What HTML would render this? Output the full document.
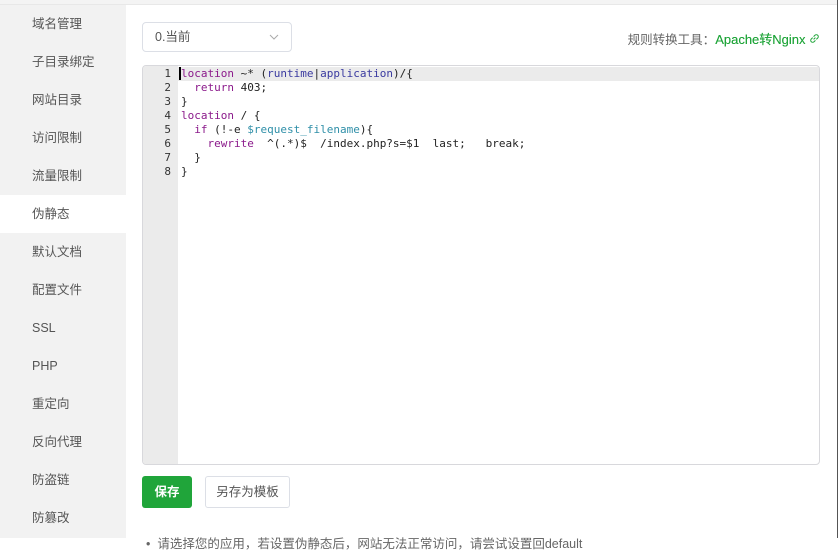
<!DOCTYPE html>
<html><head><meta charset="utf-8"><style>
*{margin:0;padding:0;box-sizing:border-box}
body{width:838px;height:538px;overflow:hidden;background:#fff;font-family:"Liberation Sans","Noto Sans CJK SC",sans-serif;position:relative}
.top{position:absolute;left:0;top:0;width:838px;height:5px;background:#f4f4f4;border-bottom:1px solid #e8e8e8}
.side{position:absolute;left:0;top:5px;width:126px;height:533px;background:#f2f2f2}
.side div{height:38px;line-height:38px;padding-left:32px;font-size:12.5px;color:#555}
.side div.on{background:#fff}
.sel{position:absolute;left:142px;top:22px;width:150px;height:30px;border:1px solid #dcdfe6;border-radius:4px;font-size:12.5px;color:#555;line-height:29px;padding-left:12px}
.sel svg{position:absolute;right:12px;top:11px}
.tool{position:absolute;right:18px;top:29px;font-size:12.5px;color:#666}
.tool b{font-weight:normal;color:#20a53a;font-size:13px;text-shadow:0 0 0.3px #20a53a}
.ed{position:absolute;left:142px;top:65px;width:678px;height:400px;border:1px solid #d8d8dc;border-radius:4px;overflow:hidden}
.gut{position:absolute;left:0;top:0;width:35px;height:100%;background:#ebebeb}
.hl{position:absolute;left:0;top:1px;width:100%;height:14px;background:#ebebeb}
.code{position:absolute;left:0;top:1px;font-family:"DejaVu Sans Mono","Liberation Mono",monospace;font-size:11px;line-height:14px;white-space:pre;color:#222}
.code .n{display:inline-block;width:28px;text-align:right;color:#333;margin-right:10px;font-size:11px;line-height:14px}
.k{color:#8b1a8b}.v{color:#2f8fa8}.p{color:#3a3aa0}
.cur{border-left:2px solid #000;margin-left:-2px}
.btn1{position:absolute;left:142px;top:476px;width:50px;height:32px;background:#20a53a;border-radius:3px;color:#fff;font-size:12.5px;line-height:32px;text-align:center;font-weight:bold}
.btn2{position:absolute;left:205px;top:476px;width:85px;height:32px;border:1px solid #dcdfe6;border-radius:3px;color:#555;font-size:12.5px;line-height:30px;text-align:center}
.note{position:absolute;left:146px;top:533px;font-size:12.5px;color:#666;white-space:nowrap}
.rb{position:absolute;right:0;top:0;width:1px;height:538px;background:#555}
</style></head><body>
<div class="top"></div>
<div class="side">
<div>域名管理</div><div>子目录绑定</div><div>网站目录</div><div>访问限制</div><div>流量限制</div><div class="on">伪静态</div><div>默认文档</div><div>配置文件</div><div>SSL</div><div>PHP</div><div>重定向</div><div>反向代理</div><div>防盗链</div><div>防篡改</div>
</div>
<div class="sel">0.当前<svg width="10" height="6" viewBox="0 0 10 6"><path d="M1 1l4 4 4-4" fill="none" stroke="#aaa" stroke-width="1"/></svg></div>
<div class="tool">规则转换工具：<b>Apache转Nginx</b> <svg width="11" height="11" viewBox="0 0 12 12" style="vertical-align:0"><path d="M5 7l2-2M4 5L2.5 6.5a2 2 0 003 3L7 8M8 7l1.5-1.5a2 2 0 00-3-3L5 4" fill="none" stroke="#20a53a" stroke-width="1.1"/></svg></div>
<div class="ed"><div class="gut"></div><div class="hl"></div>
<div class="code"><span class="n">1</span><span class="cur"></span><span class="k">location</span> ~* (<span class="p">runtime</span>|<span class="p">application</span>)/{
<span class="n">2</span>  <span class="k">return</span> 403;
<span class="n">3</span>}
<span class="n">4</span><span class="k">location</span> / {
<span class="n">5</span>  <span class="k">if</span> (!-e <span class="v">$request_filename</span>){
<span class="n">6</span>    <span class="k">rewrite</span>  ^(.*)$  /index.php?s=$1  last;   break;
<span class="n">7</span>  }
<span class="n">8</span>}</div></div>
<div class="btn1">保存</div>
<div class="btn2">另存为模板</div>
<div class="note">•&nbsp;&nbsp;请选择您的应用，若设置伪静态后，网站无法正常访问，请尝试设置回default</div>
<div class="rb"></div>
</body></html>
